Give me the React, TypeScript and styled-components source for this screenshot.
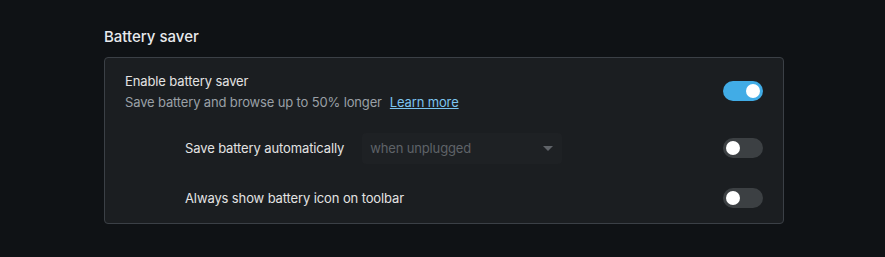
import styled, { createGlobalStyle } from "styled-components";

const GlobalStyle = createGlobalStyle`
  html, body {
    margin: 0;
    padding: 0;
    background: #0f1215;
  }
  body {
    font-family: Inter, "Noto Sans", "Liberation Sans", sans-serif;
    color: #e3e3e3;
    -webkit-font-smoothing: antialiased;
  }
`;

const Page = styled.div`
  width: 885px;
  height: 257px;
  padding: 26px 101px 0 104px;
  box-sizing: border-box;
`;

const Heading = styled.h2`
  margin: 0 0 10px;
  font-size: 15px;
  line-height: 21px;
  font-weight: 500;
  color: #e8eaed;
`;

const Card = styled.section`
  background: #1b1e21;
  border: 1px solid #3b4046;
  border-radius: 4px;
  box-sizing: border-box;
  width: 680px;
`;

const Row = styled.div<{ $indent?: boolean; $tall?: boolean }>`
  display: flex;
  align-items: center;
  height: ${({ $tall }) => ($tall ? "65px" : "50px")};
  padding: 0 20px 0 ${({ $indent }) => ($indent ? "80px" : "20px")};
  box-sizing: border-box;
`;

const Text = styled.div`
  flex: 1;
  display: flex;
  flex-direction: column;
  gap: 4px;
  padding-top: 2px;
`;

const Label = styled.span`
  font-size: 13px;
  line-height: 17px;
  letter-spacing: -0.12px;
  color: #e3e3e3;
`;

const Sub = styled.span`
  font-size: 13px;
  line-height: 17px;
  letter-spacing: -0.15px;
  color: #9aa0a6;
`;

const Link = styled.a`
  color: #7cc4f0;
  text-decoration: underline;
  margin-left: 8px;
  cursor: pointer;
`;

const Inline = styled.div`
  flex: 1;
  display: flex;
  align-items: center;
  gap: 18px;
`;

const Select = styled.div`
  width: 200px;
  height: 31px;
  background: #1e2124;
  border-radius: 4px;
  display: flex;
  align-items: center;
  justify-content: space-between;
  padding: 0 8px;
  box-sizing: border-box;
  font-size: 13px;
  letter-spacing: -0.15px;
  color: #5f6368;
`;

const Caret = styled.span`
  width: 0;
  height: 0;
  margin-right: 1px;
  border-left: 5px solid transparent;
  border-right: 5px solid transparent;
  border-top: 5px solid #5f6368;
`;

const Track = styled.button<{ $on?: boolean }>`
  width: 40px;
  height: 20px;
  border: none;
  padding: 0 3px;
  border-radius: 10px;
  background: ${({ $on }) => ($on ? "#41ace6" : "#3c4043")};
  display: flex;
  align-items: center;
  justify-content: ${({ $on }) => ($on ? "flex-end" : "flex-start")};
  cursor: pointer;
`;

const Knob = styled.span`
  width: 14px;
  height: 14px;
  border-radius: 50%;
  background: #ffffff;
`;

const Toggle = ({ on }: { on?: boolean }) => (
  <Track $on={on} aria-pressed={on}>
    <Knob />
  </Track>
);

export default function App() {
  return (
    <>
      <GlobalStyle />
      <Page>
        <Heading>Battery saver</Heading>
        <Card>
          <Row $tall>
            <Text>
              <Label>Enable battery saver</Label>
              <Sub>
                Save battery and browse up to 50% longer
                <Link>Learn more</Link>
              </Sub>
            </Text>
            <Toggle on />
          </Row>
          <Row $indent>
            <Inline>
              <Label>Save battery automatically</Label>
              <Select>
                when unplugged
                <Caret />
              </Select>
            </Inline>
            <Toggle />
          </Row>
          <Row $indent>
            <Inline>
              <Label>Always show battery icon on toolbar</Label>
            </Inline>
            <Toggle />
          </Row>
        </Card>
      </Page>
    </>
  );
}
